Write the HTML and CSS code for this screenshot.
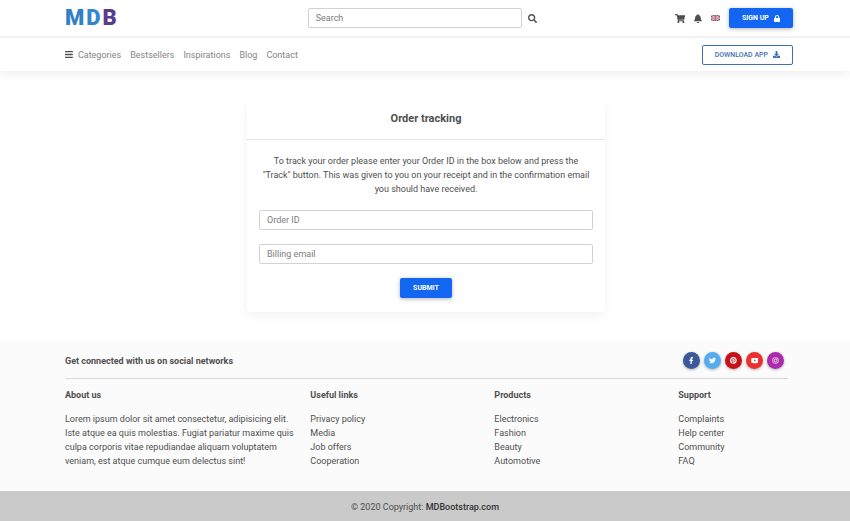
FILE: index.html
```html
<!DOCTYPE html>
<html lang="en">
<head>
  <meta charset="UTF-8" />
  <meta name="viewport" content="width=device-width, initial-scale=1.0"/>
  <title>Order tracking</title>
  <link rel="stylesheet" href="styles.css">
</head>
<body>
  <header class="header">
    <div class="topbar">
      <div class="container topbar-grid">
        <a class="logo" href="#"><span class="logo-m">M</span><span class="logo-d">D</span><span class="logo-b">B</span></a>
        <form class="search" role="search">
          <input class="input" type="search" placeholder="Search" aria-label="Search">
          <button class="icon-btn" type="submit" aria-label="Search">
            <svg class="icon" viewBox="0 0 512 512"><path d="M505 442.700L405.300 343c-4.500-4.500-10.600-7-17-7H372c27.600-35.300 44-79.700 44-128C416 93.100 322.900 0 208 0S0 93.100 0 208s93.100 208 208 208c48.300 0 92.700-16.400 128-44v16.300c0 6.400 2.500 12.500 7 17l99.700 99.700c9.400 9.400 24.600 9.400 33.900 0l28.300-28.300c9.400-9.400 9.400-24.600.1-34zM208 336c-70.700 0-128-57.200-128-128 0-70.700 57.200-128 128-128 70.700 0 128 57.200 128 128 0 70.700-57.200 128-128 128z"/></svg>
          </button>
        </form>
        <div class="actions">
          <a class="action" href="#" aria-label="Cart">
            <svg class="icon icon-cart" viewBox="0 0 576 512"><path d="M528.120 301.319l47.273-208C578.806 78.301 567.391 64 551.990 64H159.208l-9.166-44.810C147.758 8.021 137.930 0 126.529 0H24C10.745 0 0 10.745 0 24v16c0 13.255 10.745 24 24 24h69.883l70.248 343.435C147.325 417.100 136 435.222 136 456c0 30.928 25.072 56 56 56s56-25.072 56-56c0-15.674-6.447-29.835-16.824-40h209.647C430.447 426.165 424 440.326 424 456c0 30.928 25.072 56 56 56s56-25.072 56-56c0-22.172-12.888-41.332-31.579-50.405l5.517-24.276c3.413-15.018-8.002-29.319-23.403-29.319H218.117l-6.545-32h293.145c11.206 0 20.920-7.754 23.403-18.681z"/></svg>
          </a>
          <a class="action" href="#" aria-label="Notifications">
            <svg class="icon" viewBox="0 0 448 512"><path d="M224 512c35.320 0 63.970-28.650 63.970-64H160.030c0 35.350 28.650 64 63.970 64zm215.390-149.710c-19.320-20.760-55.470-51.990-55.470-154.290 0-77.700-54.480-139.900-127.940-155.160V32c0-17.670-14.320-32-31.980-32s-31.980 14.330-31.980 32v20.840C118.560 68.100 64.080 130.300 64.080 208c0 102.300-36.150 133.530-55.470 154.290-6 6.450-8.660 14.160-8.610 21.710.11 16.400 12.980 32 32.100 32h383.800c19.120 0 32-15.600 32.100-32 .05-7.550-2.610-15.270-8.610-21.710z"/></svg>
          </a>
          <a class="action" href="#" aria-label="Language">
            <svg class="flag" viewBox="0 0 18 12">
              <rect width="18" height="12" fill="#5f5c86"/>
              <path d="M0 0L18 12M18 0L0 12" stroke="#fff" stroke-width="2"/>
              <path d="M0 0L18 12M18 0L0 12" stroke="#d4737c" stroke-width="1"/>
              <path d="M9 0V12M0 6H18" stroke="#fff" stroke-width="3.400"/>
              <path d="M9 0V12M0 6H18" stroke="#cf5964" stroke-width="2.200"/>
            </svg>
          </a>
          <button class="btn btn-primary" type="button">Sign up
            <svg class="icon icon-btn-end" viewBox="0 0 448 512"><path d="M400 224h-24v-72C376 68.200 307.800 0 224 0S72 68.200 72 152v72H48c-26.500 0-48 21.500-48 48v192c0 26.500 21.500 48 48 48h352c26.500 0 48-21.500 48-48V272c0-26.500-21.500-48-48-48zm-104 0H152v-72c0-39.700 32.300-72 72-72s72 32.300 72 72v72z"/></svg>
          </button>
        </div>
      </div>
    </div>
    <div class="navbar">
      <div class="container navbar-row">
        <nav class="nav">
          <a href="#"><svg class="icon icon-bars" viewBox="0 0 448 512"><path d="M16 132h416c8.837 0 16-7.163 16-16V76c0-8.837-7.163-16-16-16H16C7.163 60 0 67.163 0 76v40c0 8.837 7.163 16 16 16zm0 160h416c8.837 0 16-7.163 16-16v-40c0-8.837-7.163-16-16-16H16c-8.837 0-16 7.163-16 16v40c0 8.837 7.163 16 16 16zm0 160h416c8.837 0 16-7.163 16-16v-40c0-8.837-7.163-16-16-16H16c-8.837 0-16 7.163-16 16v40c0 8.837 7.163 16 16 16z"/></svg>Categories</a>
          <a href="#">Bestsellers</a>
          <a href="#">Inspirations</a>
          <a href="#">Blog</a>
          <a href="#">Contact</a>
        </nav>
        <button class="btn btn-outline" type="button">Download app
          <svg class="icon icon-btn-end" viewBox="0 0 512 512"><path d="M216 0h80c13.300 0 24 10.700 24 24v168h87.700c17.800 0 26.700 21.500 14.100 34.100L269.700 378.300c-7.500 7.500-19.800 7.500-27.300 0L90.100 226.100c-12.600-12.600-3.700-34.100 14.100-34.100H192V24c0-13.300 10.700-24 24-24zm296 376v112c0 13.300-10.700 24-24 24H24c-13.300 0-24-10.700-24-24V376c0-13.300 10.700-24 24-24h146.700l49 49c20.100 20.100 52.500 20.100 72.600 0l49-49H488c13.300 0 24 10.700 24 24z"/></svg>
        </button>
      </div>
    </div>
  </header>

  <main class="main">
    <section class="card">
      <h1 class="card-header">Order tracking</h1>
      <form class="card-body">
        <p class="card-text">To track your order please enter your Order ID in the box below and press the "Track" button. This was given to you on your receipt and in the confirmation email you should have received.</p>
        <input class="input" type="text" placeholder="Order ID" aria-label="Order ID">
        <input class="input" type="email" placeholder="Billing email" aria-label="Billing email">
        <button class="btn btn-primary" type="submit">Submit</button>
      </form>
    </section>
  </main>

  <footer class="footer">
    <div class="container">
      <div class="social-row">
        <h2 class="footer-title">Get connected with us on social networks</h2>
        <div class="social">
          <a class="social-btn facebook" href="#" aria-label="Facebook"><svg class="icon" viewBox="0 0 320 512"><path d="M279.140 288l14.220-92.660h-88.910v-60.130c0-25.350 12.420-50.060 52.240-50.060h40.420V6.260S260.430 0 225.360 0c-73.220 0-121.080 44.380-121.080 124.720v70.620H22.890V288h81.390v224h100.170V288z"/></svg></a>
          <a class="social-btn twitter" href="#" aria-label="Twitter"><svg class="icon" viewBox="0 0 512 512"><path d="M459.370 151.716c.325 4.548.325 9.097.325 13.645 0 138.720-105.583 298.558-298.558 298.558-59.452 0-114.680-17.219-161.137-47.106 8.447.974 16.568 1.299 25.340 1.299 49.055 0 94.213-16.568 130.274-44.832-46.132-.975-84.792-31.188-98.112-72.772 6.498.974 12.995 1.624 19.818 1.624 9.421 0 18.843-1.300 27.614-3.573-48.081-9.747-84.143-51.980-84.143-102.985v-1.299c13.969 7.797 30.214 12.670 47.431 13.319-28.264-18.843-46.781-51.005-46.781-87.391 0-19.492 5.197-37.360 14.294-52.954 51.655 63.675 129.300 105.258 216.365 109.807-1.624-7.797-2.599-15.918-2.599-24.040 0-57.828 46.782-104.934 104.934-104.934 30.213 0 57.502 12.670 76.670 33.137 23.715-4.548 46.456-13.320 66.599-25.340-7.798 24.366-24.366 44.833-46.132 57.827 21.117-2.273 41.584-8.122 60.426-16.243-14.292 20.791-32.161 39.308-52.628 54.253z"/></svg></a>
          <a class="social-btn pinterest" href="#" aria-label="Pinterest"><svg class="icon" viewBox="0 0 496 512"><path d="M496 256c0 137-111 248-248 248-25.600 0-50.200-3.900-73.400-11.100 10.100-16.500 25.200-43.500 30.800-65 3-11.600 15.400-59 15.400-59 8.100 15.400 31.700 28.500 56.800 28.500 74.800 0 128.700-68.800 128.700-154.300 0-81.900-66.900-143.200-152.900-143.200-107 0-163.900 71.800-163.900 150.100 0 36.400 19.400 81.700 50.300 96.100 4.700 2.200 7.200 1.200 8.300-3.300.8-3.400 5-20.300 6.900-28.100.6-2.500.3-4.700-1.700-7.100-10.100-12.500-18.300-35.300-18.300-56.600 0-54.700 41.400-107.600 112-107.600 60.900 0 103.600 41.500 103.600 100.900 0 67.100-33.900 113.600-78 113.600-24.300 0-42.600-20.100-36.700-44.800 7-29.500 20.500-61.300 20.500-82.600 0-19-10.200-34.900-31.400-34.900-24.900 0-44.900 25.700-44.900 60.200 0 22 7.400 36.800 7.400 36.800s-24.500 103.800-29 123.200c-5 21.400-3 51.600-.9 71.200C65.400 450.900 0 361.100 0 256 0 119 111 8 248 8s248 111 248 248z"/></svg></a>
          <a class="social-btn youtube" href="#" aria-label="YouTube"><svg class="icon" viewBox="0 0 576 512"><path d="M549.655 124.083c-6.281-23.650-24.787-42.276-48.284-48.597C458.781 64 288 64 288 64S117.220 64 74.629 75.486c-23.497 6.322-42.003 24.947-48.284 48.597-11.412 42.867-11.412 132.305-11.412 132.305s0 89.438 11.412 132.305c6.281 23.650 24.787 41.500 48.284 47.821C117.220 448 288 448 288 448s170.780 0 213.371-11.486c23.497-6.321 42.003-24.171 48.284-47.821 11.412-42.867 11.412-132.305 11.412-132.305s0-89.438-11.412-132.305zm-317.510 213.508V175.185l142.739 81.205-142.739 81.201z"/></svg></a>
          <a class="social-btn instagram" href="#" aria-label="Instagram"><svg class="icon icon-line" viewBox="0 0 16 16"><rect x="2" y="2" width="12" height="12" rx="3"/><circle cx="8" cy="8" r="3"/><circle cx="11.500" cy="4.500" r=".4"/></svg></a>
        </div>
      </div>
    </div>
    <div class="container footer-grid">
      <div class="footer-col">
        <h2 class="footer-title">About us</h2>
        <p>Lorem ipsum dolor sit amet consectetur, adipisicing elit. Iste atque ea quis molestias. Fugiat pariatur maxime quis culpa corporis vitae repudiandae aliquam voluptatem veniam, est atque cumque eum delectus sint!</p>
      </div>
      <div class="footer-col">
        <h2 class="footer-title">Useful links</h2>
        <ul>
          <li><a href="#">Privacy policy</a></li>
          <li><a href="#">Media</a></li>
          <li><a href="#">Job offers</a></li>
          <li><a href="#">Cooperation</a></li>
        </ul>
      </div>
      <div class="footer-col">
        <h2 class="footer-title">Products</h2>
        <ul>
          <li><a href="#">Electronics</a></li>
          <li><a href="#">Fashion</a></li>
          <li><a href="#">Beauty</a></li>
          <li><a href="#">Automotive</a></li>
        </ul>
      </div>
      <div class="footer-col">
        <h2 class="footer-title">Support</h2>
        <ul>
          <li><a href="#">Complaints</a></li>
          <li><a href="#">Help center</a></li>
          <li><a href="#">Community</a></li>
          <li><a href="#">FAQ</a></li>
        </ul>
      </div>
    </div>
    <div class="copyright">© 2020 Copyright: <a href="#">MDBootstrap.com</a></div>
  </footer>
</body>
</html>
```
FILE: styles.css
```css
* {
  box-sizing: border-box;
}

body {
  margin: 0;
  min-height: 100vh;
  display: flex;
  flex-direction: column;
  font-family: Roboto, sans-serif;
  font-size: 9px;
  line-height: 14px;
  color: #4f4f4f;
  background: #fff;
}

a {
  color: inherit;
  text-decoration: none;
}

h1, h2, p, ul {
  margin: 0;
  padding: 0;
}

ul {
  list-style: none;
}

.container {
  width: 100%;
  max-width: 736px;
  margin: 0 auto;
  padding-left: 8px;
}

.icon {
  display: block;
  height: 9px;
  fill: currentColor;
}

/* header */
.header {
  box-shadow: 0 2px 9px rgba(0, 0, 0, 0.08);
}

.topbar {
  border-bottom: 2px solid #f2f2f2;
}

.topbar-grid {
  display: grid;
  grid-template-columns: repeat(3, 1fr);
  align-items: center;
  height: 36px;
}

.logo {
  display: flex;
  gap: 2px;
  font-size: 22px;
  font-weight: 900;
  line-height: 28px;
}

.logo-m {
  color: #2f7fc9;
}

.logo-d {
  color: #3187d2;
}

.logo-b {
  color: #593d8c;
}

.search {
  display: flex;
  align-items: center;
  gap: 6px;
  padding-right: 13px;
}

.input {
  display: block;
  width: 100%;
  height: 20px;
  padding: 0 7px;
  border: 1px solid #d2d2d2;
  border-radius: 2px;
  background: #fff;
  color: #4f4f4f;
  font: inherit;
  appearance: none;
}

.input::placeholder {
  color: #7c7c7c;
  opacity: 1;
}

.icon-btn {
  padding: 0;
  border: 0;
  background: none;
  color: #4f4f4f;
}

.actions {
  display: flex;
  align-items: center;
  justify-content: flex-end;
  gap: 9px;
}

.flag {
  display: block;
  width: 9px;
  height: 6px;
}

.btn {
  display: inline-flex;
  align-items: center;
  justify-content: center;
  height: 20px;
  padding: 0 13px;
  border: 0;
  border-radius: 2px;
  font-family: inherit;
  font-size: 7px;
  font-weight: 500;
  text-transform: uppercase;
  white-space: nowrap;
}

.btn-primary {
  background: #1266f1;
  color: #fff;
  font-weight: 700;
  box-shadow: 0 1px 4px rgba(0, 0, 0, 0.3);
}

.btn-outline {
  padding: 0 12px;
  border: 1px solid #3f6fb5;
  background: transparent;
  color: #3f6fb5;
}

.icon-btn-end {
  height: 7px;
  margin-left: 5px;
}

.navbar-row {
  display: flex;
  align-items: center;
  justify-content: space-between;
  height: 33px;
}

.nav {
  display: flex;
  gap: 9px;
  color: #858585;
}

.nav a {
  display: flex;
  align-items: center;
  gap: 5px;
}

.icon-bars {
  color: #4f4f4f;
}

/* order form */
.main {
  flex: 1;
  padding: 28px 14px 28px 16px;
}

.card {
  max-width: 358px;
  margin: 0 auto;
  border-radius: 4px;
  box-shadow: 0 4px 12px rgba(0, 0, 0, 0.05);
}

.card-header {
  padding: 12px;
  border-bottom: 1px solid #e6e6e6;
  font-size: 11px;
  font-weight: 700;
  line-height: 16px;
  text-align: center;
}

.card-body {
  display: flex;
  flex-direction: column;
  align-items: center;
  gap: 14px;
  padding: 14px 12px;
}

.card-text {
  text-align: center;
}

/* footer */
.footer {
  background: #fbfbfb;
}

.social-row {
  display: flex;
  align-items: center;
  justify-content: space-between;
  height: 39px;
  margin-right: 5px;
  padding: 3px 4px 0 0;
  border-bottom: 1px solid #d9d9d9;
}

.footer-title {
  font-size: 9px;
  font-weight: 700;
}

.social {
  display: flex;
  gap: 4px;
}

.social-btn {
  display: flex;
  align-items: center;
  justify-content: center;
  width: 17px;
  height: 17px;
  border-radius: 50%;
  color: #fff;
  box-shadow: 0 1px 3px rgba(0, 0, 0, 0.3);
}

.social-btn .icon {
  height: 7px;
}

.icon-line {
  fill: none;
  stroke: currentColor;
  stroke-width: 1.6;
}

.facebook {
  background: #3b5998;
}

.twitter {
  background: #55acee;
}

.pinterest {
  background: #c61118;
}

.youtube {
  background: #ed302f;
}

.instagram {
  background: #ac2bac;
}

.footer-grid {
  display: grid;
  grid-template-columns: 4fr 3fr 3fr 2fr;
  padding: 9px 0 23px;
}

.footer-col {
  padding: 0 6px 0 8px;
}

.footer-col .footer-title {
  margin-bottom: 10px;
}

.copyright {
  padding: 9px 0 7px;
  background: #cacaca;
  text-align: center;
}

.copyright a {
  color: #333;
  font-weight: 500;
}

@media (max-width: 600px) {
  .topbar-grid,
  .footer-grid {
    grid-template-columns: 1fr;
    height: auto;
  }

  .navbar-row {
    flex-wrap: wrap;
    height: auto;
  }
}
```
